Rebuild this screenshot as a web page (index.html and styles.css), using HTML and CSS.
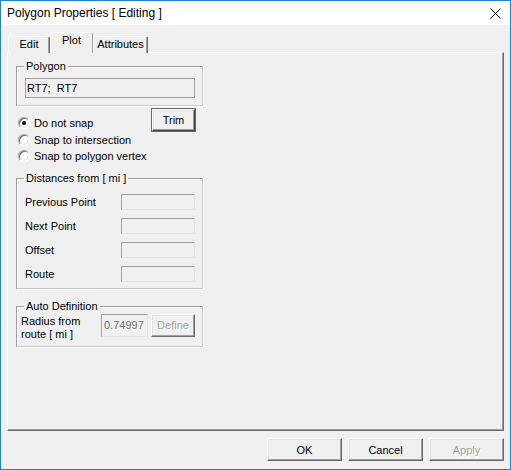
FILE: index.html
```html
<!DOCTYPE html>
<html><head>
<title>Polygon Properties</title>
<link rel="stylesheet" href="styles.css">
</head>
<body>
<div class="window">
  <div class="titlebar">
    <span class="title">Polygon Properties [ Editing ]</span>
    <svg class="close" width="11" height="11" viewBox="0 0 11 11">
      <path d="M0.5 0.5 L10.5 10.5 M10.5 0.5 L0.5 10.5" stroke="#000" stroke-width="1" fill="none"/>
    </svg>
  </div>
  <div class="client">
    <div class="tabs">
      <div class="tab edit">Edit</div>
      <div class="tab plot sel">Plot</div>
      <div class="tab attr">Attributes</div>
    </div>
    <div class="page">
      <fieldset class="grp polygon">
        <legend>Polygon</legend>
        <div class="field ro">RT7;  RT7</div>
      </fieldset>

      <div class="snap">
        <div class="radios">
          <label class="radio"><span class="knob on"></span>Do not snap</label>
          <label class="radio"><span class="knob"></span>Snap to intersection</label>
          <label class="radio"><span class="knob"></span>Snap to polygon vertex</label>
        </div>
        <div class="btn trim">Trim</div>
      </div>

      <fieldset class="grp dist">
        <legend>Distances from [ mi ]</legend>
        <div class="rows">
          <span>Previous Point</span><div class="field"></div>
          <span>Next Point</span><div class="field"></div>
          <span>Offset</span><div class="field"></div>
          <span>Route</span><div class="field"></div>
        </div>
      </fieldset>

      <fieldset class="grp auto">
        <legend>Auto Definition</legend>
        <div class="autorow">
          <span class="lbl">Radius from<br>route [ mi ]</span>
          <div class="field ro num">0.74997</div>
          <div class="btn off define">Define</div>
        </div>
      </fieldset>
    </div>
    <div class="buttons">
      <div class="btn big">OK</div>
      <div class="btn big">Cancel</div>
      <div class="btn big off">Apply</div>
    </div>
  </div>
</div>
</body>
</html>
```

FILE: styles.css
```css
html, body { margin: 0; padding: 0; background: #fff; }
body { font-family: "Liberation Sans", Arial, sans-serif; font-size: 11px; color: #000; }

.window { width: 511px; height: 470px; box-sizing: border-box; border: 1px solid #1883d7; display: flex; flex-direction: column; background: #f0f0f0; }

.titlebar { height: 24px; background: #fff; display: flex; align-items: center; justify-content: space-between; padding: 0 9px 0 6px; }
.title { font-size: 12px; }
.close { display: block; }

.client { flex: 1; display: flex; flex-direction: column; padding: 8px 6px 7px 6px; }

/* tab strip */
.tabs { display: flex; align-items: flex-end; height: 20px; padding-left: 1px; margin-bottom: -1px; position: relative; z-index: 1; }
.tab { height: 17px; box-sizing: border-box; border-top: 1px solid #fff; border-left: 1px solid #fff; border-right: 1px solid #696969; box-shadow: inset -1px 0 0 #a0a0a0; border-radius: 2px 2px 0 0; text-align: center; line-height: 15px; background: #f0f0f0; }
.tab.edit { width: 42px; }
.tab.plot { width: 43px; }
.tab.attr { width: 55px; }
.tab.sel { height: 21px; line-height: 14px; padding-bottom: 4px; border-right-color: #a0a0a0; box-shadow: none; }

.page { height: 379px; box-sizing: border-box; border-top: 1px solid #fff; border-left: 1px solid #fff; border-right: 1px solid #696969; border-bottom: 1px solid #696969; box-shadow: inset -1px -1px 0 #a0a0a0; padding: 7px 8px 0 8px; }

/* group boxes */
.grp { margin: 0; width: 187px; box-sizing: border-box; border: 1px solid; border-color: #a0a0a0 #c8c8c8 #c8c8c8 #a0a0a0; box-shadow: inset 1px 1px 0 #fff, 1px 1px 0 #fff; min-width: 0; }
.grp legend { padding: 0 2px; line-height: 13px; margin-left: -1px; }
.polygon { padding: 5px 7px 7px 8px; }
.dist { margin-top: 7px; padding: 9px 7px 6px 8px; }
.auto { margin-top: 11px; padding: 1px 7px 9px 4px; }
.auto legend { margin-left: 3px; }

.field { box-sizing: border-box; height: 16px; border: 1px solid; border-color: #a0a0a0 #e3e3e3 #e3e3e3 #a0a0a0; background: #f0f0f0; white-space: pre; line-height: 18px; padding-left: 1px; }
.polygon .field { height: 20px; border-color: #a0a0a0; }

.snap { width: 187px; display: flex; justify-content: space-between; align-items: flex-start; margin-top: 3px; }
.radios { margin-left: 2px; margin-top: 6px; }
.radio { display: flex; align-items: center; height: 16.5px; }
.knob { width: 12px; height: 12px; box-sizing: border-box; border-radius: 50%; background: #fff; border: 1px solid; border-color: #a0a0a0 #fff #fff #a0a0a0; box-shadow: inset 1px 1px 0 #696969, inset -1px -1px 0 #e3e3e3; margin-right: 4px; position: relative; }
.knob.on::after { content: ""; position: absolute; left: 3px; top: 3px; width: 4px; height: 4px; border-radius: 50%; background: #000; }

.btn { box-sizing: border-box; display: flex; align-items: center; justify-content: center; background: #f0f0f0; border: 1px solid; border-color: #fff #696969 #696969 #fff; box-shadow: inset -1px -1px 0 #a0a0a0, inset 1px 1px 0 #e3e3e3; }
.btn.off { color: #a0a0a0; text-shadow: 1px 1px 0 #fff; }
.trim { width: 43px; height: 22px; margin-right: 8px; outline: 1px solid #696969; border-color: #fff #404040 #404040 #fff; }

.rows { display: grid; grid-template-columns: 1fr 74px; grid-auto-rows: 16px; row-gap: 8px; align-items: center; }

.autorow { display: flex; align-items: flex-start; height: 23px; }
.lbl { flex: 1; line-height: 13px; padding-top: 1px; }
.num { width: 47px; height: 23px; color: #6d6d6d; line-height: 20px; padding-left: 2px; margin-right: 3px; }
.define { width: 44px; height: 23px; }

.buttons { display: flex; justify-content: flex-end; gap: 6px; margin-top: 7px; }
.big { width: 75px; height: 23px; }
```
